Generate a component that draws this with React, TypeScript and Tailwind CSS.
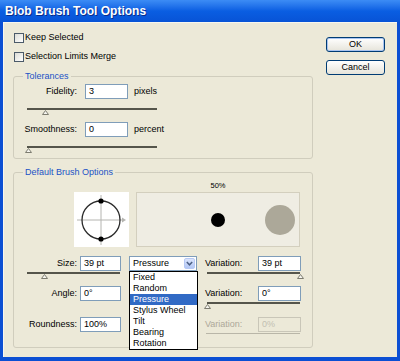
import React from "react";

function Thumb({ className = "", disabled = false }: { className?: string; disabled?: boolean }) {
  return (
    <svg width="7" height="5" viewBox="0 0 7 5" className={`block ${className}`}>
      <path
        d="M3.5 0.5 L6.5 4.5 L0.5 4.5 Z"
        fill="#f6f5ef"
        stroke={disabled ? "#c4c1b3" : "#7d7c70"}
        strokeWidth="1"
      />
    </svg>
  );
}

function Field({ value, w, disabled = false }: { value: string; w: string; disabled?: boolean }) {
  return (
    <div
      className={`${w} h-[15px] border pl-[3px] leading-[13px] ${
        disabled
          ? "border-[#c9c6b8] bg-[#ece9d8] text-[#c2bfb2]"
          : "border-[#7f9db9] bg-white text-black"
      }`}
    >
      {value}
    </div>
  );
}

function Checkbox({ label }: { label: string }) {
  return (
    <div className="flex h-[19px] items-center">
      <div className="ml-[1px] h-[10px] w-[10px] border border-[#4b5a69] bg-gradient-to-br from-[#dcdcd6] to-white" />
      <span className="ml-[1px]">{label}</span>
    </div>
  );
}

function Group({ title, children, className = "" }: { title: string; children: React.ReactNode; className?: string }) {
  return (
    <div className={`relative rounded-[3px] border border-[#d0cdbd] ${className}`}>
      <span className="absolute -top-[7px] left-[9px] bg-[#ece9d8] px-[2px] leading-[12px] text-[#2152c6]">
        {title}
      </span>
      {children}
    </div>
  );
}

const modes = ["Fixed", "Random", "Pressure", "Stylus Wheel", "Tilt", "Bearing", "Rotation"];

export default function App() {
  return (
    <div className="flex h-[361px] w-[400px] flex-col bg-[#0b4fd3] font-['Liberation_Sans',Arial,sans-serif] text-[9px] text-black">
      {/* Title bar */}
      <div className="flex h-[22px] shrink-0 items-center bg-gradient-to-b from-[#3c8cf5] via-[#0a5ee2] to-[#0853d6] pl-[5px] text-[12px] font-bold text-white [text-shadow:1px_1px_0_#0a2c8a]">
        Blob Brush Tool Options
      </div>

      {/* Body */}
      <div className="mx-[3px] mb-[4px] flex flex-1 border-l border-t border-[#f7f6ef] bg-[#ece9d8]">
        {/* Left column */}
        <div className="w-[309px] shrink-0 pl-[9px] pt-[5px]">
          <Checkbox label="Keep Selected" />
          <Checkbox label="Selection Limits Merge" />

          <Group title="Tolerances" className="mt-[10px] pb-[5px] pt-[7px]">
            <div className="flex h-[15px] items-center">
              <span className="w-[63px] text-right">Fidelity:</span>
              <div className="ml-[8px]">
                <Field value="3" w="w-[43px]" />
              </div>
              <span className="ml-[6px]">pixels</span>
            </div>
            <div className="ml-[13px] mt-[9px]">
              <div className="h-[2px] w-[130px] bg-[#55554b]" />
              <Thumb className="ml-[15px]" />
            </div>
            <div className="mt-[7px] flex h-[15px] items-center">
              <span className="w-[63px] text-right">Smoothness:</span>
              <div className="ml-[8px]">
                <Field value="0" w="w-[43px]" />
              </div>
              <span className="ml-[6px]">percent</span>
            </div>
            <div className="ml-[13px] mt-[9px]">
              <div className="h-[2px] w-[130px] bg-[#55554b]" />
              <Thumb className="-ml-[2px]" />
            </div>
          </Group>

          <Group title="Default Brush Options" className="mt-[13px] pb-[13px] pt-[8px]">
            {/* Previews */}
            <div className="flex items-end">
              <div className="ml-[60px] h-[55px] w-[55px] bg-white">
                <svg width="55" height="55" viewBox="0 0 55 55">
                  <line x1="3" y1="28" x2="50" y2="28" stroke="#b4b4b0" strokeWidth="1" />
                  <path d="M48 25.5 L52 28 L48 30.5 Z" fill="#b4b4b0" />
                  <line x1="27" y1="3" x2="27" y2="53" stroke="#b4b4b0" strokeWidth="1" />
                  <circle cx="27" cy="28" r="19" fill="none" stroke="#2a2a2a" strokeWidth="1.3" />
                  <circle cx="27" cy="9" r="2.6" fill="#000" />
                  <circle cx="27" cy="47" r="2.6" fill="#000" />
                </svg>
              </div>
              <div className="ml-[7px] flex flex-col items-center">
                <span className="mb-[1px] h-[10px] text-[7.5px] leading-[10px]">50%</span>
                <div className="flex h-[55px] w-[164px] items-center border border-[#d3cfbe] bg-[#efede3]">
                  <div className="ml-[74px] h-[14px] w-[14px] rounded-full bg-black" />
                  <div className="ml-[40px] h-[30px] w-[30px] rounded-full bg-[#aca899]" />
                </div>
              </div>
            </div>

            {/* Size */}
            <div className="mt-[9px] flex h-[15px] items-center">
              <span className="w-[63px] text-right">Size:</span>
              <div className="ml-[3px]">
                <Field value="39 pt" w="w-[41px]" />
              </div>
              <div className="relative ml-[8px] flex h-[15px] w-[68px] items-center border border-[#7f9db9] bg-white">
                <span className="pl-[3px]">Pressure</span>
                <div className="ml-auto mr-[1px] flex h-[11px] w-[11px] items-center justify-center rounded-[2px] border border-[#b7c9f4] bg-gradient-to-b from-[#dbe5fc] to-[#b3c7f5]">
                  <svg width="7" height="5" viewBox="0 0 7 5">
                    <path d="M0.8 1 L3.5 3.8 L6.2 1" fill="none" stroke="#4d6185" strokeWidth="1.5" />
                  </svg>
                </div>
                {/* Open list */}
                <div className="absolute left-[-1px] top-[14px] z-10 w-[69px] border border-black bg-white">
                  {modes.map((m) => (
                    <div
                      key={m}
                      className={`h-[11px] pl-[3px] leading-[11px] ${
                        m === "Pressure" ? "bg-[#316ac5] text-white" : ""
                      }`}
                    >
                      {m}
                    </div>
                  ))}
                </div>
              </div>
              <span className="ml-[8px] w-[53px]">Variation:</span>
              <Field value="39 pt" w="w-[43px]" />
            </div>
            <div className="mt-[1px] flex">
              <div className="ml-[13px]">
                <div className="h-[2px] w-[93px] bg-[#55554b]" />
                <Thumb className="ml-[14px]" />
              </div>
              <div className="ml-[87px]">
                <div className="h-[2px] w-[93px] bg-[#55554b]" />
                <Thumb className="ml-[90px]" />
              </div>
            </div>

            {/* Angle */}
            <div className="mt-[7px] flex h-[15px] items-center">
              <span className="w-[63px] text-right">Angle:</span>
              <div className="ml-[3px]">
                <Field value="0°" w="w-[41px]" />
              </div>
              <div className="ml-[8px] w-[68px]" />
              <span className="ml-[8px] w-[53px]">Variation:</span>
              <Field value="0°" w="w-[43px]" />
            </div>
            <div className="ml-[193px] mt-[1px]">
              <div className="h-[2px] w-[93px] bg-[#55554b]" />
              <Thumb className="-ml-[3px]" />
            </div>

            {/* Roundness */}
            <div className="mt-[8px] flex h-[15px] items-center">
              <span className="w-[63px] text-right">Roundness:</span>
              <div className="ml-[3px]">
                <Field value="100%" w="w-[41px]" />
              </div>
              <div className="ml-[8px] w-[68px]" />
              <span className="ml-[8px] w-[53px] text-[#aca899]">Variation:</span>
              <Field value="0%" w="w-[43px]" disabled />
            </div>
            <div className="ml-[192px] mt-[1px] h-[1px] w-[94px] bg-[#b9b6a8]" />
          </Group>
        </div>

        {/* Buttons */}
        <div className="ml-[13px] flex flex-col gap-[8px] pt-[14px]">
          <button className="h-[15px] w-[59px] rounded-[3px] border border-[#003c74] bg-gradient-to-b from-white to-[#e6e4da] text-[9px] leading-[11px] shadow-[inset_0_0_0_1px_#a9c4f0]">
            OK
          </button>
          <button className="h-[15px] w-[59px] rounded-[3px] border border-[#003c74] bg-gradient-to-b from-white to-[#e6e4da] text-[9px] leading-[11px]">
            Cancel
          </button>
        </div>
      </div>
    </div>
  );
}
